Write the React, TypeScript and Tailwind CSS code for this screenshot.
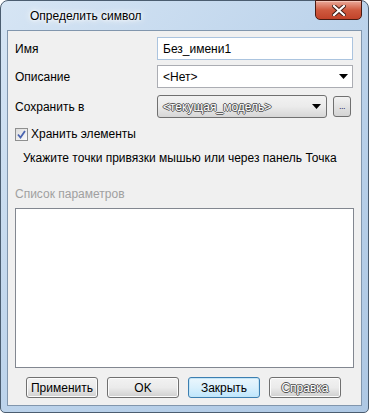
import React, { useState } from 'react';

const font = { fontFamily: '"Liberation Sans", Arial, sans-serif' };

// ghost text: white glyphs with a dark fringe, as the reference shows
const ghost = 'text-white [text-shadow:1px_0_0_#555,-1px_0_0_#555,0_1px_0_#555,0_-1px_0_#555]';

function Arrow() {
  return (
    <svg width="9" height="5" viewBox="0 0 9 5" className="shrink-0">
      <path d="M0 0 H9 L4.5 5 Z" fill="#000" />
    </svg>
  );
}

function WinButton({ label, focused, dim }: { label: string; focused?: boolean; dim?: boolean }) {
  return (
    <button
      type="button"
      className={
        'h-[21px] w-[72px] rounded-[3px] border text-[12px] leading-none flex items-center justify-center ' +
        (focused
          ? 'border-[#3c7fb1] bg-gradient-to-b from-[#eaf6fd] via-[#d9f0fc] to-[#bee6fd] shadow-[inset_0_0_0_1px_#c4e5f6]'
          : 'border-[#707070] bg-gradient-to-b from-[#f2f2f2] via-[#ebebeb] to-[#cfcfcf] shadow-[inset_0_0_0_1px_#fcfcfc]')
      }
    >
      <span className={dim ? ghost : 'text-black'}>{label}</span>
    </button>
  );
}

export default function App() {
  const [name, setName] = useState('Без_имени1');
  const [keep, setKeep] = useState(true);

  return (
    <div style={font} className="w-[369px] h-[413px] bg-white">
      <div className="relative w-[369px] h-[413px] rounded-t-[8px] rounded-b-[5px] border border-[#4b5d70] bg-gradient-to-br from-[#d6e5f4] via-[#bcd3eb] to-[#aec8e4] flex flex-col">
        {/* title bar */}
        <div className="h-[29px] flex items-center pl-[29px] shrink-0">
          <span className="text-[12px] text-black [text-shadow:0_0_10px_#fff,0_0_6px_#fff,0_0_3px_#fff]">
            Определить символ
          </span>
        </div>
        <div className="absolute top-[-1px] right-[6px] w-[47px] h-[20px] rounded-b-[5px] border border-[#4a1b12] bg-gradient-to-b from-[#e9a99a] via-[#cf5a3f] to-[#c2432a] shadow-[inset_0_1px_0_#f3c5b8] flex items-center justify-center">
          <svg width="14" height="11" viewBox="0 0 14 11">
            <path d="M2 1 L12 10 M12 1 L2 10" stroke="#3b1a14" strokeWidth="4" strokeLinecap="square" />
            <path d="M2 1 L12 10 M12 1 L2 10" stroke="#fff" strokeWidth="2.2" strokeLinecap="square" />
          </svg>
        </div>

        {/* client area */}
        <div className="mx-[6px] h-[376px] border border-[#8196ad] bg-[#f0f0f0] pl-[7px] pr-[8px] flex flex-col text-[12px] text-black">
          <div className="mt-[6px] flex items-center h-[23px]">
            <span className="w-[142px]">Имя</span>
            <input
              value={name}
              onChange={e => setName(e.target.value)}
              className="flex-1 h-[23px] border border-[#abc4df] bg-white px-[5px] text-[12px] outline-none"
            />
          </div>
          <div className="mt-[5px] flex items-center h-[23px]">
            <span className="w-[142px]">Описание</span>
            <div className="flex-1 h-[23px] border border-[#abadb3] bg-white pl-[5px] pr-[4px] flex items-center justify-between">
              <span>&lt;Нет&gt;</span>
              <Arrow />
            </div>
          </div>
          <div className="mt-[7px] flex items-center h-[23px]">
            <span className="w-[142px]">Сохранить в</span>
            <div className="w-[170px] h-[23px] rounded-[3px] border border-[#707070] bg-gradient-to-b from-[#f2f2f2] via-[#ebebeb] to-[#d6d6d6] pl-[5px] pr-[5px] flex items-center justify-between">
              <span className={ghost}>&lt;текущая_модель&gt;</span>
              <Arrow />
            </div>
            <div className="ml-[6px] w-[18px] h-[21px] rounded-[3px] border border-[#707070] bg-gradient-to-b from-[#f2f2f2] to-[#d4d4d4] flex items-end justify-center pb-[5px]">
              <span className="text-[9px] leading-none tracking-[-0.5px] text-[#2b2b6b]">...</span>
            </div>
          </div>
          <label className="mt-[9px] flex items-center h-[14px] cursor-pointer" onClick={() => setKeep(!keep)}>
            <span className="w-[13px] h-[13px] border border-[#8e8f8f] bg-gradient-to-br from-[#dcdcdc] to-[#fbfbfb] flex items-center justify-center">
              {keep && (
                <svg width="9" height="9" viewBox="0 0 9 9">
                  <path d="M1 4.5 L3.5 7.5 L8 1" stroke="#4a64b0" strokeWidth="1.8" fill="none" />
                </svg>
              )}
            </span>
            <span className="ml-[3px]">Хранить элементы</span>
          </label>
          <div className="mt-[9px] pl-[8px] h-[16px] flex items-center whitespace-nowrap">
            Укажите точки привязки мышью или через панель Точка
          </div>
          <div className="mt-[19px] h-[18px] flex items-center text-[#a0a0a0]">Список параметров</div>
          <div className="mt-[5px] h-[160px] mr-[-1px] border border-[#828790] bg-white" />
          <div className="mt-[9px] flex pl-[11px] gap-[9px]">
            <WinButton label="Применить" />
            <WinButton label="OK" />
            <WinButton label="Закрыть" focused />
            <WinButton label="Справка" dim />
          </div>
        </div>
      </div>
    </div>
  );
}
